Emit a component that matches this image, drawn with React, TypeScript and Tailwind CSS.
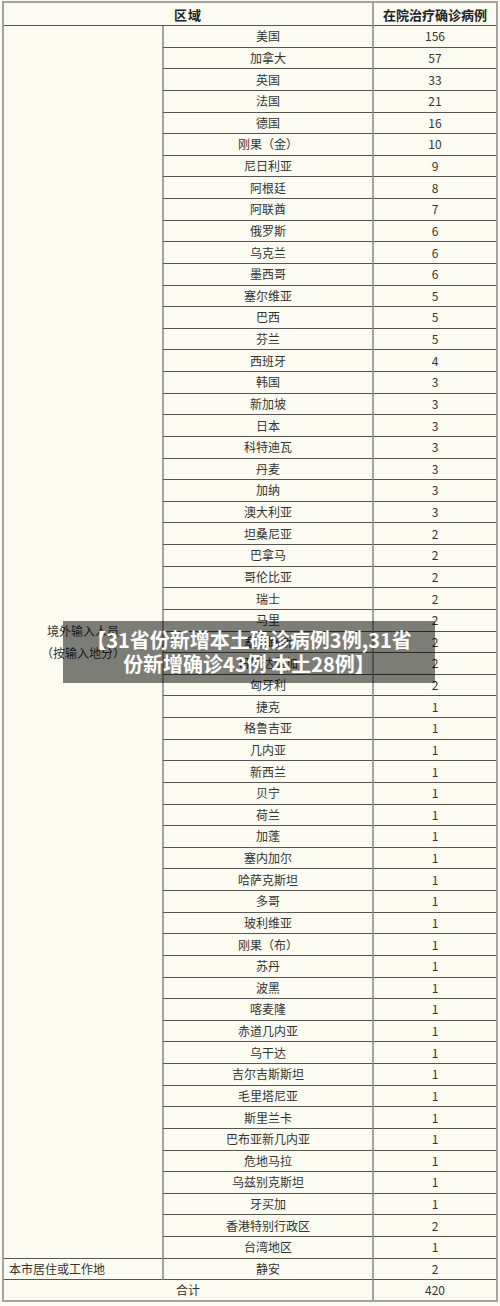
import React from "react";

const rows: [string, number][] = [
  ["美国", 156], ["加拿大", 57], ["英国", 33], ["法国", 21], ["德国", 16],
  ["刚果（金）", 10], ["尼日利亚", 9], ["阿根廷", 8], ["阿联酋", 7], ["俄罗斯", 6],
  ["乌克兰", 6], ["墨西哥", 6], ["塞尔维亚", 5], ["巴西", 5], ["芬兰", 5],
  ["西班牙", 4], ["韩国", 3], ["新加坡", 3], ["日本", 3], ["科特迪瓦", 3],
  ["丹麦", 3], ["加纳", 3], ["澳大利亚", 3], ["坦桑尼亚", 2], ["巴拿马", 2],
  ["哥伦比亚", 2], ["瑞士", 2], ["马里", 2], ["塞浦路斯", 2], ["哥斯达黎加", 2],
  ["匈牙利", 2], ["捷克", 1], ["格鲁吉亚", 1], ["几内亚", 1], ["新西兰", 1],
  ["贝宁", 1], ["荷兰", 1], ["加蓬", 1], ["塞内加尔", 1], ["哈萨克斯坦", 1],
  ["多哥", 1], ["玻利维亚", 1], ["刚果（布）", 1], ["苏丹", 1], ["波黑", 1],
  ["喀麦隆", 1], ["赤道几内亚", 1], ["乌干达", 1], ["吉尔吉斯斯坦", 1], ["毛里塔尼亚", 1],
  ["斯里兰卡", 1], ["巴布亚新几内亚", 1], ["危地马拉", 1], ["乌兹别克斯坦", 1], ["牙买加", 1],
  ["香港特别行政区", 2], ["台湾地区", 1],
];

const font = { fontFamily: '"Noto Sans CJK SC", "Noto Sans", sans-serif' };

export default function App() {
  return (
    <div className="w-[500px] h-[1306px] bg-[#fbfbf1] pt-[1px] pl-[2px]" style={font}>
      <div className="relative w-[496px]">
        <div className="grid grid-cols-[158px_210px_124px] grid-rows-[23px_repeat(58,21.638px)_20px] border-2 border-[#a3a3a0] text-[12px] text-[#333] leading-none">
          <div className="col-span-2 flex items-center justify-center border-b border-[#555] font-bold text-[13px] text-[#222] tracking-[1px]">
            区域
          </div>
          <div className="flex items-center justify-center border-b border-l-2 border-b-[#555] border-l-[#a3a3a0] font-bold text-[13px] text-[#222]">
            在院治疗确诊病例
          </div>
          <div className="row-[span_57/span_57] flex flex-col items-center justify-center gap-[10px] border-b border-[#555]">
            <span>境外输入人员</span>
            <span>（按输入地分）</span>
          </div>
          {rows.map(([name, n], i) => (
            <React.Fragment key={i}>
              <div className="flex items-center justify-center border-b border-l-2 border-b-[#555] border-l-[#a3a3a0]">
                {name}
              </div>
              <div className="flex items-center justify-center border-b border-l-2 border-b-[#555] border-l-[#a3a3a0]">
                {n}
              </div>
            </React.Fragment>
          ))}
          <div className="flex items-center pl-[5px] border-b border-[#555]">本市居住或工作地</div>
          <div className="flex items-center justify-center border-b border-l-2 border-b-[#555] border-l-[#a3a3a0]">静安</div>
          <div className="flex items-center justify-center border-b border-l-2 border-b-[#555] border-l-[#a3a3a0]">2</div>
          <div className="col-span-2 flex items-center justify-center">合计</div>
          <div className="flex items-center justify-center border-l-2 border-[#a3a3a0]">420</div>
        </div>
        <div className="absolute left-[61px] top-[620px] w-[372px] h-[62px] bg-black/50 flex flex-col items-center justify-center text-white font-bold text-[20px] leading-[24px]">
          <span>【31省份新增本土确诊病例3例,31省</span>
          <span>份新增确诊43例 本土28例】</span>
        </div>
      </div>
    </div>
  );
}
